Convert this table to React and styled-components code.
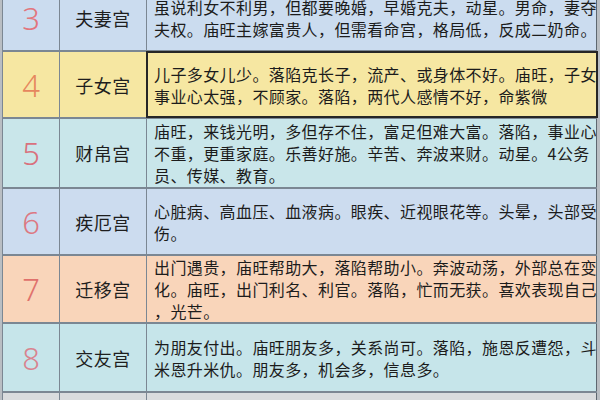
import styled, { createGlobalStyle } from 'styled-components';

const GlobalStyle = createGlobalStyle`
  html, body {
    margin: 0;
    padding: 0;
    background: #b9bec3;
  }
  * {
    box-sizing: border-box;
  }
`;

const Page = styled.div`
  width: 600px;
  height: 400px;
  overflow: hidden;
  padding: 0 3px 0 2px;
  background: #b9bec3;
  font-family: 'Noto Sans CJK SC', 'Noto Sans', sans-serif;
`;

const Table = styled.div`
  margin-top: -15px;
  border-left: 1.5px solid #7b8793;
`;

const Row = styled.div`
  display: grid;
  grid-template-columns: 57px 87px 1fr;
  min-height: ${(props) => props.$h}px;
  background: ${(props) => props.$bg};
  border-bottom: 2px solid #7b8793;
`;

const NumCell = styled.div`
  display: flex;
  align-items: center;
  justify-content: center;
  border-right: 1.5px solid #7b8793;
  font-family: 'Noto Sans', 'Liberation Sans', sans-serif;
  font-size: 31px;
  font-weight: 300;
  color: ${(props) => props.$color};
`;

const NameCell = styled.div`
  display: flex;
  align-items: center;
  justify-content: center;
  border-right: 1.5px solid #7b8793;
  font-size: 18px;
  color: #1e1e1e;
  letter-spacing: 0.5px;
`;

const DescCell = styled.div`
  display: flex;
  flex-direction: column;
  justify-content: center;
  overflow: hidden;
  padding: 0 0 0 7px;
  border-right: 1.5px solid #5d6770;
  position: relative;
  z-index: ${(props) => (props.$selected ? 1 : 0)};
  outline: ${(props) => (props.$selected ? '2px solid #262626' : 'none')};
  outline-offset: -1px;
`;

const Line = styled.div`
  white-space: nowrap;
  font-size: 16px;
  line-height: 22px;
  letter-spacing: 0.4px;
  color: #1c1c1c;
`;

const rows = [
  {
    num: '3',
    name: '夫妻宫',
    bg: '#cbdcef',
    color: '#e2767e',
    h: 67,
    lines: [
      '虽说利女不利男，但都要晚婚，早婚克夫，动星。男命，妻夺',
      '夫权。庙旺主嫁富贵人，但需看命宫，格局低，反成二奶命。',
    ],
  },
  {
    num: '4',
    name: '子女宫',
    bg: '#f6e7a2',
    color: '#e6875e',
    h: 67,
    selected: true,
    lines: [
      '儿子多女儿少。落陷克长子，流产、或身体不好。庙旺，子女',
      '事业心太强，不顾家。落陷，两代人感情不好，命紫微',
    ],
  },
  {
    num: '5',
    name: '财帛宫',
    bg: '#c9e6ea',
    color: '#d9717d',
    h: 70,
    lines: [
      '庙旺，来钱光明，多但存不住，富足但难大富。落陷，事业心',
      '不重，更重家庭。乐善好施。辛苦、奔波来财。动星。4公务',
      '员、传媒、教育。',
    ],
  },
  {
    num: '6',
    name: '疾厄宫',
    bg: '#ccdcef',
    color: '#dd7882',
    h: 67,
    lines: [
      '心脏病、高血压、血液病。眼疾、近视眼花等。头晕，头部受',
      '伤。',
    ],
  },
  {
    num: '7',
    name: '迁移宫',
    bg: '#f9d5ba',
    color: '#e0716c',
    h: 68,
    lines: [
      '出门遇贵，庙旺帮助大，落陷帮助小。奔波动荡，外部总在变',
      '化。庙旺，出门利名、利官。落陷，忙而无获。喜欢表现自己',
      '，光芒。',
    ],
  },
  {
    num: '8',
    name: '交友宫',
    bg: '#c6e5ea',
    color: '#d9838f',
    h: 69,
    lines: [
      '为朋友付出。庙旺朋友多，关系尚可。落陷，施恩反遭怨，斗',
      '米恩升米仇。朋友多，机会多，信息多。',
    ],
  },
  {
    num: '9',
    name: '事业宫',
    bg: '#d9dcde',
    color: '#d9838f',
    h: 67,
    lines: [
      '要依，主若论出明，事业运大，官职有名，主官得官星，成就',
      '大，庙旺，事业有成。',
    ],
  },
];

export default function App() {
  return (
    <Page>
      <GlobalStyle />
      <Table>
        {rows.map((row) => (
          <Row key={row.num} $bg={row.bg} $h={row.h}>
            <NumCell $color={row.color}>{row.num}</NumCell>
            <NameCell>{row.name}</NameCell>
            <DescCell $selected={row.selected}>
              {row.lines.map((line, i) => (
                <Line key={i}>{line}</Line>
              ))}
            </DescCell>
          </Row>
        ))}
      </Table>
    </Page>
  );
}
